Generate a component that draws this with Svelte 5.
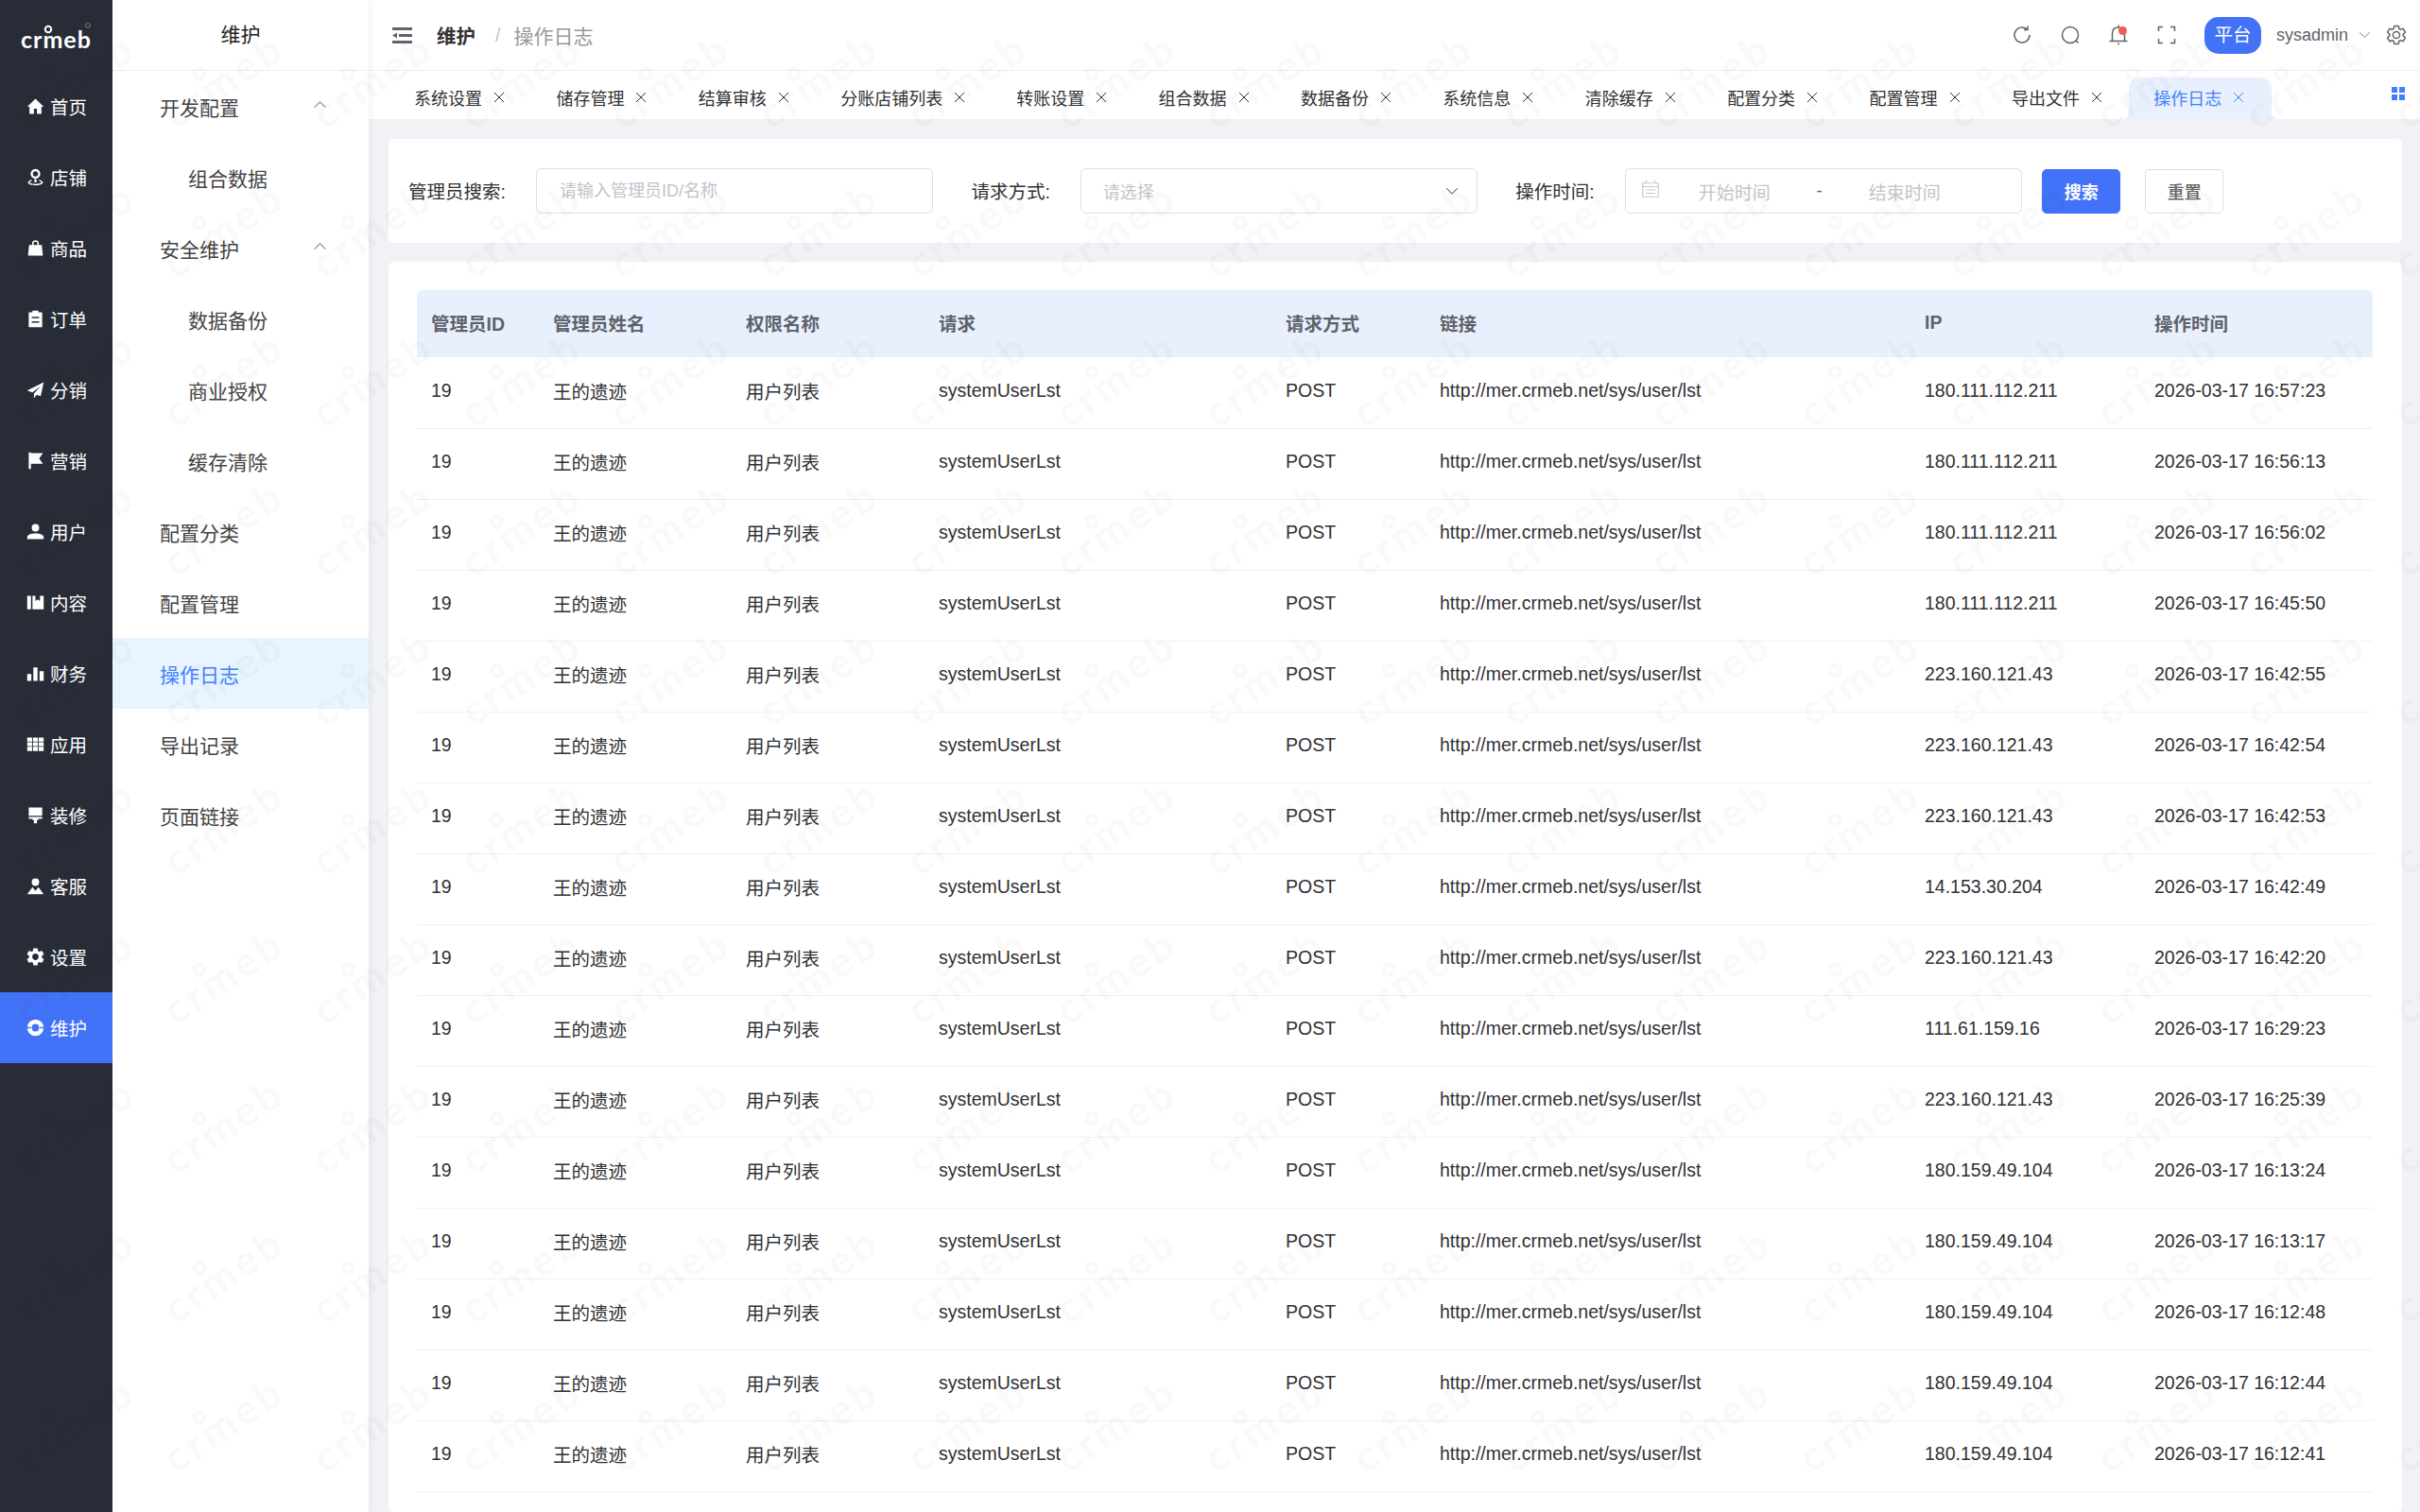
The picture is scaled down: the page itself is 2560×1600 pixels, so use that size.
<script>
	const gear =
		'M19.14 12.94c.04-.3.06-.61.06-.94 0-.32-.02-.64-.07-.94l2.03-1.58a.49.49 0 0 0 .12-.61l-1.92-3.32a.488.488 0 0 0-.59-.22l-2.39.96c-.5-.38-1.03-.7-1.62-.94l-.36-2.54a.484.484 0 0 0-.48-.41h-3.84c-.24 0-.43.17-.47.41l-.36 2.54c-.59.24-1.13.57-1.62.94l-2.39-.96c-.22-.08-.47 0-.59.22L2.74 8.87c-.12.21-.08.47.12.61l2.03 1.58c-.05.3-.09.63-.09.94s.02.64.07.94l-2.03 1.58a.49.49 0 0 0-.12.61l1.92 3.32c.12.22.37.29.59.22l2.39-.96c.5.38 1.03.7 1.62.94l.36 2.54c.05.24.24.41.48.41h3.84c.24 0 .44-.17.47-.41l.36-2.54c.59-.24 1.13-.56 1.62-.94l2.39.96c.22.08.47 0 .59-.22l1.92-3.32c.12-.22.07-.47-.12-.61l-2.01-1.58zM12 15.6c-1.98 0-3.6-1.62-3.6-3.6s1.62-3.6 3.6-3.6 3.6 1.62 3.6 3.6-1.62 3.6-3.6 3.6z';

	const rail = [
		{ label: '首页', d: 'M12 2 1 12.5h3V22h6v-7h4v7h6v-9.5h3z' },
		{
			label: '店铺',
			d: 'M12 1a6.5 6.5 0 1 0 0 13 6.5 6.5 0 0 0 0-13zm0 3a3.5 3.5 0 1 1 0 7 3.5 3.5 0 0 1 0-7zM10.5 14.5h3v4.5h-3zM7 15.5C4 16.2 2 17.5 2 19c0 2.2 4.5 4 10 4s10-1.8 10-4c0-1.5-2-2.8-5-3.5v2c1.8.4 3 1 3 1.5 0 1-3.5 2-8 2s-8-1-8-2c0-.5 1.2-1.1 3-1.5z'
		},
		{ label: '商品', d: 'M3.5 8h4V6a4.5 4.5 0 0 1 9 0v2h4L22 22H2zM9.5 8h5V6a2.5 2.5 0 0 0-5 0z' },
		{ label: '订单', d: 'M8 1h8v2h5v20H3V3h5zM7 9h10v2H7zM7 15h10v2H7z' },
		{ label: '分销', d: 'M23 2 1 13l7 2.5L19 7l-9 10v6l4-4.5 5 2z' },
		{ label: '营销', d: 'M3 1h3v22H3zM6 2h16l-5 7 5 7H6z' },
		{ label: '用户', d: 'M12 2a5 5 0 1 0 0 10 5 5 0 0 0 0-10zM1 22v-2.5C1 16 6 14.5 12 14.5s11 1.5 11 5V22z' },
		{ label: '内容', d: 'M1 3h5v18H1zM8 3h4v7l3-2 3 2V3h5v18H8z' },
		{ label: '财务', d: 'M1 13h5.5v9H1zM9.2 4h5.6v18H9.2zM17.5 9H23v13h-5.5z' },
		{
			label: '应用',
			d: 'M1 3h6.6v5.4H1zM8.7 3h6.6v5.4H8.7zM16.4 3H23v5.4h-6.6zM1 9.4h6.6v5.2H1zM8.7 9.4h6.6v5.2H8.7zM16.4 9.4H23v5.2h-6.6zM1 15.6h6.6V21H1zM8.7 15.6h6.6V21H8.7zM16.4 15.6H23V21h-6.6z'
		},
		{ label: '装修', d: 'M3 2h18v11H3zM3 14.5h18V17h-5v1.5h-2V23h-4v-4.5H8V17H3z' },
		{ label: '客服', d: 'M12 2a5 5 0 1 0 0 10 5 5 0 0 0 0-10zM8 13.5 1 23h22l-7-9.5-4 5z' },
		{ label: '设置', d: gear, box: '2 2 20 20' },
		{
			label: '维护',
			active: true,
			d: 'M12 1a11 11 0 1 0 0 22 11 11 0 0 0 0-22zm0 6a5 5 0 1 1 0 10 5 5 0 0 1 0-10zM1 11h5v2H1zM18 11h5v2h-5z'
		}
	];

	const submenu = [
		{ label: '开发配置', open: true },
		{ label: '组合数据', sub: true },
		{ label: '安全维护', open: true },
		{ label: '数据备份', sub: true },
		{ label: '商业授权', sub: true },
		{ label: '缓存清除', sub: true },
		{ label: '配置分类' },
		{ label: '配置管理' },
		{ label: '操作日志', active: true },
		{ label: '导出记录' },
		{ label: '页面链接' }
	];

	const tabs = [
		'系统设置',
		'储存管理',
		'结算审核',
		'分账店铺列表',
		'转账设置',
		'组合数据',
		'数据备份',
		'系统信息',
		'清除缓存',
		'配置分类',
		'配置管理',
		'导出文件',
		'操作日志'
	];

	const columns = ['管理员ID', '管理员姓名', '权限名称', '请求', '请求方式', '链接', 'IP', '操作时间'];

	const logs = [
		['180.111.112.211', '2026-03-17 16:57:23'],
		['180.111.112.211', '2026-03-17 16:56:13'],
		['180.111.112.211', '2026-03-17 16:56:02'],
		['180.111.112.211', '2026-03-17 16:45:50'],
		['223.160.121.43', '2026-03-17 16:42:55'],
		['223.160.121.43', '2026-03-17 16:42:54'],
		['223.160.121.43', '2026-03-17 16:42:53'],
		['14.153.30.204', '2026-03-17 16:42:49'],
		['223.160.121.43', '2026-03-17 16:42:20'],
		['111.61.159.16', '2026-03-17 16:29:23'],
		['223.160.121.43', '2026-03-17 16:25:39'],
		['180.159.49.104', '2026-03-17 16:13:24'],
		['180.159.49.104', '2026-03-17 16:13:17'],
		['180.159.49.104', '2026-03-17 16:12:48'],
		['180.159.49.104', '2026-03-17 16:12:44'],
		['180.159.49.104', '2026-03-17 16:12:41']
	];
</script>

<div class="page">
	<aside class="rail">
		<div class="logo">
			<svg width="119" height="75" viewBox="0 0 119 75">
				<text class="logo-text" x="22" y="51">crmeb</text>
				<circle cx="51" cy="31" r="3.2" fill="none" stroke="#fff" stroke-width="2" />
				<circle cx="93" cy="27" r="2.4" fill="none" stroke="#8a8d94" stroke-width="0.8" />
			</svg>
		</div>
		{#each rail as item}
			<div class="rail-item" class:active={item.active}>
				<svg class="rail-icon" viewBox={item.box ?? '0 0 24 24'}><path d={item.d} fill="#fff" fill-rule="evenodd" /></svg>
				<span>{item.label}</span>
			</div>
		{/each}
	</aside>

	<nav class="submenu">
		<div class="submenu-title">维护</div>
		{#each submenu as item}
			<div class="submenu-item" class:sub={item.sub} class:active={item.active}>
				<span>{item.label}</span>
				{#if item.open}
					<svg class="submenu-arrow" viewBox="0 0 16 10"><path d="M1.5 8.5 8 2l6.5 6.5" /></svg>
				{/if}
			</div>
		{/each}
	</nav>

	<div class="main">
		<header class="topbar">
			<svg class="fold" viewBox="0 0 21 17">
				<path d="M0 0h21v3H0zM7 7h14v3H7zM0 14h21v3H0zM5 5.5v6L0 8.5z" fill="#5f6270" />
			</svg>
			<span class="crumb-main">维护</span>
			<span class="crumb-sep">/</span>
			<span class="crumb-page">操作日志</span>

			<div class="tools">
				<svg class="tool" viewBox="0 0 24 24">
					<path d="M20 12a8 8 0 1 1-2.6-5.9M18 2.5v4h-4" />
				</svg>
				<svg class="tool" viewBox="0 0 24 24">
					<circle cx="12" cy="12" r="8.5" /><path d="m18 18 2.5 2.5" />
				</svg>
				<div class="bell">
					<svg class="tool" viewBox="0 0 24 24">
						<path d="M5.5 18V10.5C5.5 6.5 8 4 12 4s6.5 2.5 6.5 6.5V18M2.5 18.5h19M12 1.5V4M11 21.5h2" />
					</svg>
					<i class="bell-dot"></i>
				</div>
				<svg class="tool" viewBox="0 0 24 24">
					<path d="M3.5 8V3.5H8M16 3.5h4.5V8M20.5 16v4.5H16M8 20.5H3.5V16" />
				</svg>
			</div>
			<span class="platform">平台</span>
			<span class="user">sysadmin</span>
			<svg class="user-arrow" viewBox="0 0 16 10"><path d="M1.5 1.5 8 8l6.5-6.5" /></svg>
			<svg class="tool user-gear" viewBox="0 0 24 24"><path d={gear} /></svg>
		</header>

		<div class="tabs">
			{#each tabs as tab, i}
				<div class="tab" class:active={i === tabs.length - 1}>
					<span>{tab}</span>
					<svg class="tab-close" viewBox="0 0 14 14"><path d="M2 2l10 10M12 2 2 12" /></svg>
				</div>
			{/each}
			<svg class="tabs-more" viewBox="0 0 14 14">
				<path d="M0 0h6v6H0zM8 0h6v6H8zM0 8h6v6H0zM8 8h6v6H8z" fill="#437ffc" />
			</svg>
		</div>

		<section class="card filter">
			<label class="field">
				<span class="field-label">管理员搜索:</span>
				<input class="control search-input" placeholder="请输入管理员ID/名称" />
			</label>
			<label class="field">
				<span class="field-label">请求方式:</span>
				<div class="control select">
					<span>请选择</span>
					<svg class="select-arrow" viewBox="0 0 16 10"><path d="M1.5 1.5 8 8l6.5-6.5" /></svg>
				</div>
			</label>
			<div class="field">
				<span class="field-label">操作时间:</span>
				<div class="control range">
					<svg class="calendar" viewBox="0 0 18 19">
						<path d="M.75 3.75h16.5v14.5H.75zM.75 7.5h16.5M4.5.75v3M13.5.75v3M4 11h10M4 14.5h10" />
					</svg>
					<span class="range-text">开始时间</span>
					<span class="range-sep">-</span>
					<span class="range-text">结束时间</span>
				</div>
			</div>
			<button class="btn primary">搜索</button>
			<button class="btn">重置</button>
		</section>

		<section class="card list">
			<table>
				<thead>
					<tr>
						{#each columns as col}
							<th>{col}</th>
						{/each}
					</tr>
				</thead>
				<tbody>
					{#each logs as log}
						<tr>
							<td>19</td>
							<td>王的遗迹</td>
							<td>用户列表</td>
							<td>systemUserLst</td>
							<td>POST</td>
							<td>http://mer.crmeb.net/sys/user/lst</td>
							<td>{log[0]}</td>
							<td>{log[1]}</td>
						</tr>
					{/each}
				</tbody>
			</table>
		</section>
	</div>

	<svg class="watermark" width="2560" height="1600" aria-hidden="true">
		<defs>
			<pattern id="wm" width="157.3" height="158" patternUnits="userSpaceOnUse" patternTransform="translate(5 16)">
				<g transform="translate(24 122) rotate(-34)">
					<text class="wm-text" x="0" y="0">crmeb</text>
					<circle cx="54" cy="-36" r="5.5" fill="none" stroke="#000" stroke-width="4" />
				</g>
			</pattern>
		</defs>
		<rect width="2560" height="1600" fill="url(#wm)" opacity="0.025" />
	</svg>
</div>

<style>
	:global(body) {
		margin: 0;
		background: #f0f2f5;
	}

	.page {
		position: relative;
		display: flex;
		width: 2560px;
		height: 1600px;
		overflow: hidden;
		font-family: 'Liberation Sans', 'Noto Sans CJK SC', sans-serif;
		color: #303133;
	}

	/* first level rail */
	.rail {
		flex: 0 0 119px;
		background: #282c37;
		color: #fff;
	}

	.logo {
		height: 75px;
	}

	.logo-text {
		font-family: 'Lato', sans-serif;
		font-weight: 700;
		font-size: 25px;
		letter-spacing: 1px;
		fill: #fff;
	}

	.rail-item {
		display: flex;
		align-items: center;
		height: 75px;
		padding-left: 28px;
		gap: 6px;
		font-size: 19.5px;
	}

	.rail-item.active {
		background: #4272f8;
	}

	.rail-icon {
		width: 19px;
		height: 19px;
	}

	/* second level menu */
	.submenu {
		flex: 0 0 271px;
		background: #fff;
		box-shadow: 2px 0 6px rgba(0, 21, 41, 0.05);
		z-index: 1;
	}

	.submenu-title {
		height: 74px;
		line-height: 74px;
		border-bottom: 1px solid #ebeef5;
		text-align: center;
		font-size: 21px;
		color: #222;
	}

	.submenu-item {
		position: relative;
		display: flex;
		align-items: center;
		height: 75px;
		padding-left: 50px;
		font-size: 21px;
		color: #444;
	}

	.submenu-item.sub {
		padding-left: 80px;
	}

	.submenu-item.active {
		background: #e8f4ff;
		color: #437ffc;
	}

	.submenu-arrow {
		position: absolute;
		left: 212px;
		top: 31px;
		width: 15px;
		height: 9px;
		fill: none;
		stroke: #888;
		stroke-width: 1.2;
	}

	/* right side */
	.main {
		flex: 1;
		min-width: 0;
		display: flex;
		flex-direction: column;
	}

	.topbar {
		display: flex;
		align-items: center;
		flex: 0 0 74px;
		padding-left: 25px;
		background: #fff;
		border-bottom: 1px solid #ebeef5;
	}

	.fold {
		width: 21px;
		height: 17px;
		margin-right: 26px;
	}

	.crumb-main {
		font-size: 20.5px;
		font-weight: 700;
		color: #303133;
	}

	.crumb-sep {
		margin: 0 14px 0 21px;
		font-size: 19.5px;
		color: #c0c4cc;
	}

	.crumb-page {
		padding-bottom: 1px;
		font-size: 21px;
		color: #999;
	}

	.tools {
		display: flex;
		align-items: center;
		gap: 27px;
		margin-left: auto;
	}

	.tool {
		display: block;
		width: 24px;
		height: 24px;
		fill: none;
		stroke: #5f6368;
		stroke-width: 1.5;
	}

	.bell {
		position: relative;
	}

	.bell-dot {
		position: absolute;
		top: 2.5px;
		left: 12.5px;
		width: 9px;
		height: 9px;
		border-radius: 50%;
		background: #f05a5a;
	}

	.platform {
		width: 60px;
		height: 39px;
		margin-left: 28px;
		border-radius: 15px;
		background: #4272f8;
		color: #fff;
		font-size: 19.5px;
		line-height: 39px;
		text-align: center;
	}

	.user {
		margin-left: 16px;
		font-size: 18px;
		color: #5f6368;
	}

	.user-arrow {
		width: 13px;
		height: 8px;
		margin-left: 11px;
		fill: none;
		stroke: #777;
		stroke-width: 1.2;
	}

	.user-gear {
		margin-left: 15px;
		margin-right: 13px;
	}

	.tabs {
		position: relative;
		display: flex;
		align-items: flex-end;
		flex: 0 0 51px;
		padding-left: 22px;
		background: #fff;
	}

	.tab {
		position: relative;
		display: flex;
		align-items: center;
		box-sizing: border-box;
		width: 150.4px;
		height: 44px;
		padding: 0 0 3px 26px;
		font-size: 18px;
		color: #303133;
	}

	.tab:nth-child(4) {
		width: 186px;
	}

	.tab.active {
		background: #e8f0fe;
		border-radius: 12px 12px 0 0;
		color: #437ffc;
	}

	.tab.active::before,
	.tab.active::after {
		content: '';
		position: absolute;
		bottom: 0;
		width: 8px;
		height: 8px;
	}

	.tab.active::before {
		left: -8px;
		background: radial-gradient(circle at 0 0, transparent 8px, #e8f0fe 8.5px);
	}

	.tab.active::after {
		right: -8px;
		background: radial-gradient(circle at 100% 0, transparent 8px, #e8f0fe 8.5px);
	}

	.tab-close {
		width: 14px;
		height: 14px;
		margin-left: 11px;
		fill: none;
		stroke: currentColor;
		stroke-width: 1;
	}

	.tabs-more {
		position: absolute;
		left: 2140px;
		top: 17px;
		width: 14px;
		height: 14px;
	}

	.card {
		margin: 0 19px 0 21px;
		background: #fff;
		border-radius: 6px;
	}

	.filter {
		display: flex;
		flex: none;
		align-items: center;
		height: 110px;
		margin-top: 21px;
		padding: 0 21px;
		box-sizing: border-box;
	}

	.field {
		display: flex;
		align-items: center;
		margin-right: 40.5px;
	}

	.field-label {
		margin-right: 32px;
		padding-bottom: 2px;
		font-size: 19.5px;
		white-space: nowrap;
		color: #303133;
	}

	.control {
		box-sizing: border-box;
		width: 420px;
		height: 48px;
		border: 1px solid #dcdfe6;
		border-radius: 6px;
		background: #fff;
		font-family: inherit;
		font-size: 18px;
		color: #c0c4cc;
	}

	.search-input {
		padding: 0 24px;
		outline: none;
	}

	.search-input::placeholder {
		color: #c0c4cc;
	}

	.select {
		display: flex;
		align-items: center;
		justify-content: space-between;
		padding: 0 19px 0 23px;
	}

	.select-arrow {
		width: 14px;
		height: 9px;
		fill: none;
		stroke: #666;
		stroke-width: 1.2;
	}

	.range {
		display: flex;
		align-items: center;
		padding-left: 17px;
		font-size: 19px;
		margin-right: -19px;
	}

	.calendar {
		flex: none;
		width: 18px;
		height: 19px;
		margin-top: -6px;
		fill: none;
		stroke: #c8cacf;
		stroke-width: 1.2;
	}

	.range-text {
		width: 160px;
		text-align: center;
	}

	.range-sep {
		width: 20px;
		text-align: center;
		color: #606266;
	}

	.btn {
		flex: none;
		box-sizing: border-box;
		width: 83px;
		height: 47px;
		margin-right: 26px;
		padding-bottom: 2px;
		border: 1px solid #dcdfe6;
		border-radius: 5px;
		background: #fff;
		font-family: inherit;
		font-size: 18px;
		font-weight: 500;
		color: #606266;
	}

	.btn.primary {
		border-color: #4272f8;
		background: #4272f8;
		font-weight: 700;
		color: #fff;
	}

	.list {
		flex: 1;
		min-height: 0;
		margin-top: 20px;
		padding: 30px 31px 0 30px;
	}

	table {
		width: 100%;
		table-layout: fixed;
		border-collapse: collapse;
		font-size: 19.5px;
	}

	th {
		box-sizing: border-box;
		height: 71px;
		padding: 0 0 3px 15px;
		background: #e8f0fe;
		font-weight: 700;
		text-align: left;
		color: #5f6269;
	}

	th:first-child {
		border-radius: 6px 0 0 0;
	}

	th:last-child {
		border-radius: 0 6px 0 0;
	}

	th:nth-child(1) { width: 129px; }
	th:nth-child(2) { width: 204px; }
	th:nth-child(3) { width: 204px; }
	th:nth-child(4) { width: 367px; }
	th:nth-child(5) { width: 163px; }
	th:nth-child(6) { width: 513px; }
	th:nth-child(7) { width: 243px; }

	td {
		box-sizing: border-box;
		height: 75px;
		padding: 0 0 4px 15px;
		border-bottom: 1px solid #f0f1f3;
		white-space: nowrap;
		color: #303133;
	}

	.watermark {
		position: absolute;
		left: 0;
		top: 0;
		z-index: 5;
		pointer-events: none;
	}

	.wm-text {
		font-family: 'Lato', sans-serif;
		font-weight: 700;
		font-size: 44px;
		letter-spacing: 4px;
		fill: #000;
	}
</style>
